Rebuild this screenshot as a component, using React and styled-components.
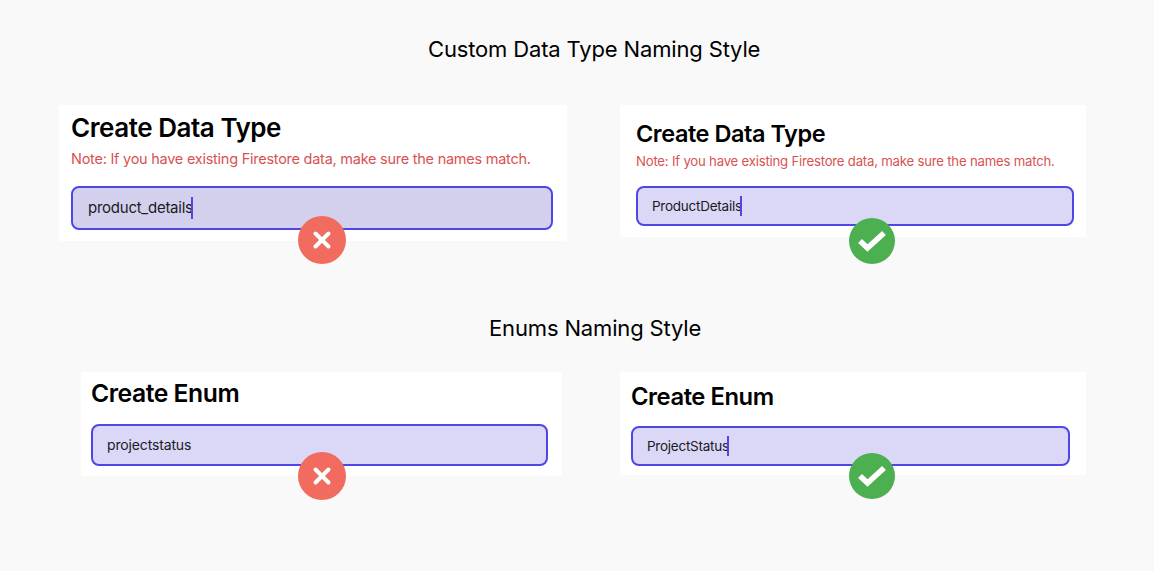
import React from "react";
import styled, { createGlobalStyle } from "styled-components";

const Global = createGlobalStyle`
  html, body { margin: 0; padding: 0; background: #f9f9f9; }
  body { font-family: "Inter", "Roboto", sans-serif; color: #000; }
`;

const Page = styled.main`
  width: 1154px;
  height: 571px;
  overflow: hidden;
  background: #f9f9f9;
  display: flex;
  flex-direction: column;
  padding-top: 33px;
  box-sizing: border-box;
`;

const SectionTitle = styled.h2`
  margin: ${(p) => p.$top}px 0 0;
  padding-left: ${(p) => p.$left}px;
  height: 32px;
  font-size: 22px;
  line-height: 32px;
  font-weight: 400;
  letter-spacing: -0.15px;
  white-space: nowrap;
`;

const Pair = styled.div`
  display: grid;
  grid-template-columns: 620px 466px;
  margin-top: ${(p) => p.$top}px;
`;

const Card = styled.section`
  position: relative;
  box-sizing: border-box;
  width: ${(p) => p.$w}px;
  height: ${(p) => p.$h}px;
  margin-left: ${(p) => p.$ml}px;
  padding: ${(p) => p.$pt}px 0 0 ${(p) => p.$pl}px;
  background: #fff;
`;

const Heading = styled.h3`
  margin: 0;
  font-size: ${(p) => p.$size}px;
  line-height: 32px;
  font-weight: 600;
  letter-spacing: -0.45px;
  white-space: nowrap;
`;

const Note = styled.p`
  margin: ${(p) => p.$top}px 0 0;
  font-size: ${(p) => p.$size}px;
  line-height: 20px;
  color: #d85252;
  letter-spacing: ${(p) => p.$spacing}px;
  white-space: nowrap;
`;

const Field = styled.div`
  box-sizing: border-box;
  display: flex;
  align-items: center;
  width: ${(p) => p.$w}px;
  height: ${(p) => p.$h}px;
  margin-top: ${(p) => p.$top}px;
  padding-left: ${(p) => p.$pad}px;
  background: ${(p) => p.$bg || "#dad7f7"};
  border: 2px solid #4f46e5;
  border-radius: 8px;
  font-size: ${(p) => p.$size}px;
  line-height: 20px;
  color: #1a1a22;
  letter-spacing: ${(p) => p.$spacing}px;
`;

const Caret = styled.span`
  display: inline-block;
  width: 2px;
  height: ${(p) => p.$h}px;
  margin-left: -1.5px;
  background: #4f46e5;
`;

const Badge = styled.span`
  position: absolute;
  left: ${(p) => p.$x}px;
  top: ${(p) => p.$y}px;
  width: ${(p) => p.$d}px;
  height: ${(p) => p.$d}px;
  border-radius: 50%;
  background: ${(p) => (p.$ok ? "#4caf50" : "#f16b5e")};
  display: flex;
  align-items: center;
  justify-content: center;
`;

const Cross = () => (
  <svg width="20" height="20" viewBox="0 0 20 20" fill="none">
    <path d="M3.5 3.5 16.5 16.5M16.5 3.5 3.5 16.5" stroke="#fff" strokeWidth="4" strokeLinecap="round" />
  </svg>
);

const Check = () => (
  <svg width="30" height="24" viewBox="0 0 30 24" fill="none">
    <path d="M3 12 10.5 19 27 4" stroke="#fff" strokeWidth="5.6" strokeLinejoin="miter" />
  </svg>
);

export default function App() {
  return (
    <Page>
      <Global />
      <SectionTitle $top={0} $left={428}>Custom Data Type Naming Style</SectionTitle>
      <Pair $top={40}>
        <Card $w={508} $h={136} $ml={59} $pt={7} $pl={12}>
          <Heading $size={26}>Create Data Type</Heading>
          <Note $top={5} $size={14.5} $spacing={-0.25}>Note: If you have existing Firestore data, make sure the names match.</Note>
          <Field $w={482} $h={44} $top={17} $pad={15} $size={15} $spacing={-0.25} $bg="#d3d0ee">product_details<Caret $h={22} /></Field>
          <Badge $x={239} $y={111} $d={48}><Cross /></Badge>
        </Card>
        <Card $w={466} $h={132} $ml={0} $pt={13} $pl={16}>
          <Heading $size={23.5}>Create Data Type</Heading>
          <Note $top={1} $size={13.2} $spacing={-0.22}>Note: If you have existing Firestore data, make sure the names match.</Note>
          <Field $w={438} $h={40} $top={15} $pad={14} $size={13.5} $spacing={-0.25}>ProductDetails<Caret $h={20} /></Field>
          <Badge $x={229} $y={113} $d={46} $ok><Check /></Badge>
        </Card>
      </Pair>
      <SectionTitle $top={71} $left={489}>Enums Naming Style</SectionTitle>
      <Pair $top={28}>
        <Card $w={481} $h={104} $ml={81} $pt={5} $pl={10}>
          <Heading $size={24.7}>Create Enum</Heading>
          <Field $w={457} $h={42} $top={15} $pad={14} $size={14} $spacing={-0.15}>projectstatus</Field>
          <Badge $x={217} $y={80} $d={48}><Cross /></Badge>
        </Card>
        <Card $w={466} $h={103} $ml={0} $pt={9} $pl={11}>
          <Heading $size={23.8}>Create Enum</Heading>
          <Field $w={439} $h={40} $top={13} $pad={14} $size={13.5} $spacing={-0.25}>ProjectStatus<Caret $h={20} /></Field>
          <Badge $x={229} $y={81} $d={46} $ok><Check /></Badge>
        </Card>
      </Pair>
    </Page>
  );
}
